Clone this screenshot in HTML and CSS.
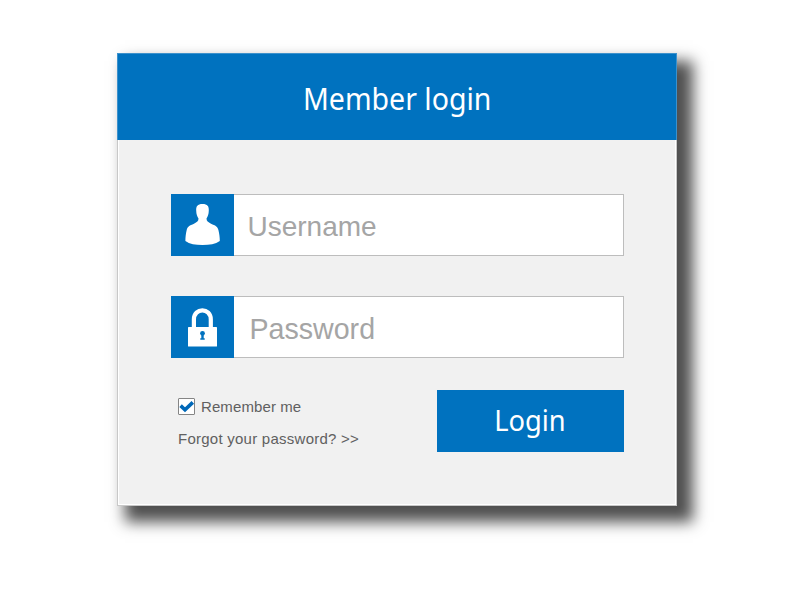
FILE: index.html
```html
<!DOCTYPE html>
<html lang="en">
<head>
<meta charset="utf-8">
<title>Member login</title>
<link rel="stylesheet" href="styles.css">
</head>
<body>
<main class="card">
  <header class="card-header"><h1 class="title">Member login</h1></header>
  <form class="card-body">
    <label class="field">
      <span class="field-icon">
        <svg width="63" height="62" viewBox="0 0 63 62"><path fill="#fff" d="M31.500 10C26.500 10 25 12.300 25.200 16.500C25.300 20.500 26.300 22.500 27.500 24.500C27.500 27 26 28.200 23 29.700C18.500 31.500 16.600 32.500 15.700 36C14.800 39.500 14.400 43.500 14.400 47C18.500 50 24.500 51 31.500 51C38.500 51 44.500 50 48.800 47C48.800 43.500 48.300 39.500 47.400 36C46.500 32.500 44.500 31.500 40 29.700C37 28.200 35.500 27 35.500 24.500C36.700 22.500 37.700 20.500 37.800 16.500C38 12.300 36.500 10 31.500 10Z"/></svg>
      </span>
      <span class="field-text">Username</span>
    </label>
    <label class="field">
      <span class="field-icon">
        <svg width="63" height="62" viewBox="0 0 63 62"><path fill="none" stroke="#fff" stroke-width="4.200" d="M22.900 32V23.500C22.900 11.300 39.800 11.300 39.800 23.500V32"/><rect x="17" y="31" width="29" height="19.500" rx=".6" fill="#fff"/><g fill="#0072bf"><circle cx="31.500" cy="37.300" r="2.400"/><path d="M30.300 38h2.400v4.300h1v1.500h-4.400v-1.500h1z"/></g></svg>
      </span>
      <span class="field-text field-text-password">Password</span>
    </label>
    <div class="actions">
      <div class="options">
        <label class="remember">
          <span class="checkbox"><svg width="16" height="16" viewBox="0 0 16 16"><path fill="none" stroke="#0068b8" stroke-width="3.600" d="M1.600 6.600L6 10.800L13.800 3.400"/></svg></span>
          <span class="remember-text">Remember me</span>
        </label>
        <a class="forgot">Forgot your password? &gt;&gt;</a>
      </div>
      <button class="login" type="button"><span class="login-text">Login</span></button>
    </div>
  </form>
</main>
</body>
</html>
```
FILE: styles.css
```css
* {
  box-sizing: border-box;
}

body {
  min-height: 600px;
  margin: 0;
  padding: 53px 0 0 117px;
  background: #fff;
  font-family: "Liberation Sans", Arial, sans-serif;
}

.card {
  width: 560px;
  height: 453px;
  background: #f1f1f1;
  border: 1px solid #c8c8c8;
  border-top: 0;
  box-shadow: inset 0 0 0 1px #fff, 12px 12px 14px 4px #505050;
}

.card-header {
  display: flex;
  align-items: center;
  justify-content: center;
  height: 87px;
  margin: 0 -1px;
  background: #0072bf;
  border: 1px solid #3c91cc;
  border-bottom: 0;
}

.title {
  margin: 4px 0 0;
  color: #fff;
  font: 400 30px/40px "Noto Sans", sans-serif;
  transform: scaleX(.95);
}

.card-body {
  padding: 54px 53px 0;
}

.field {
  display: flex;
  width: 453px;
  height: 62px;
  margin-bottom: 40px;
  background: #fff;
  border: 1px solid #bdbdbd;
}

.field-icon {
  width: 63px;
  height: 62px;
  margin: -1px 0 0 -1px;
  background: #0072bf;
}

.field-icon svg {
  display: block;
}

.field-text {
  padding: 1px 0 0 13.5px;
  color: #a5a5a5;
  font-size: 28px;
  line-height: 61px;
}

.field-text-password {
  padding: 2px 0 0 15.5px;
  font-size: 28.6px;
}

.actions {
  display: flex;
  justify-content: space-between;
  width: 453px;
  margin-top: -8px;
}

.options {
  display: flex;
  flex-direction: column;
  gap: 14px;
  padding: 8px 0 0 7px;
  color: #606060;
  font-size: 15px;
  line-height: 18px;
}

.remember {
  display: flex;
  gap: 6px;
}

.remember-text {
  letter-spacing: .1px;
}

.forgot {
  letter-spacing: .25px;
}

.checkbox {
  width: 17px;
  height: 17px;
  background: #fff;
  border: 1px solid #858585;
  border-radius: 1px;
}

.checkbox svg {
  display: block;
}

.login {
  width: 187px;
  height: 62px;
  padding: 0 2px 2px 0;
  border: 0;
  background: #0072bf;
  color: #fff;
  font: 400 29px/60px "Noto Sans", sans-serif;
}

.login-text {
  display: inline-block;
  transform: scaleX(.94);
}
```
